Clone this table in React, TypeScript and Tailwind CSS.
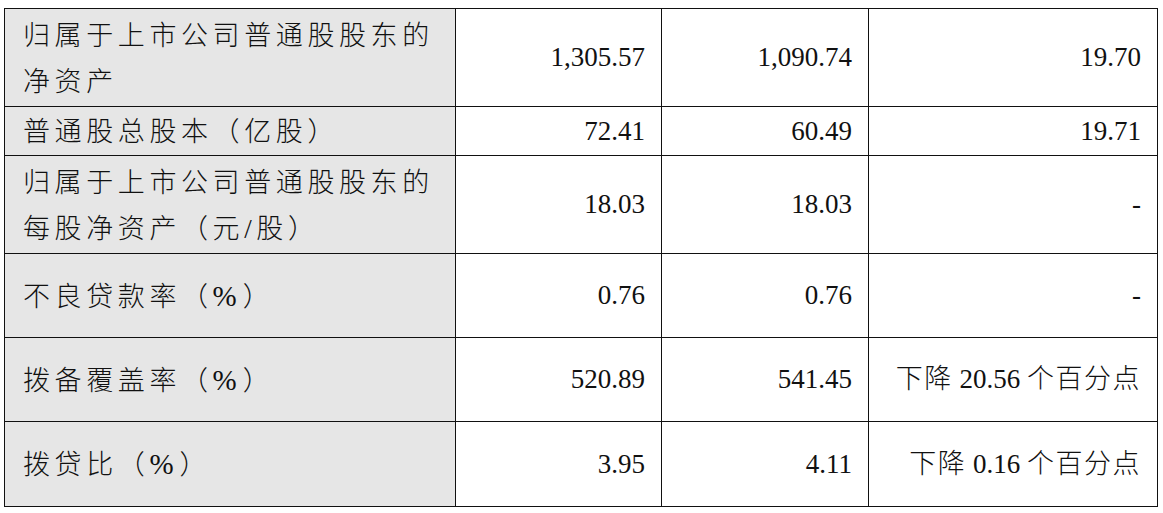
import React from 'react';

type Row = {
  label: React.ReactNode[];
  cur: string;
  prev: string;
  change: React.ReactNode;
  h: string;
};

const cjk = "font-['Liberation_Serif','Noto_Sans_CJK_SC',serif]";

// 百分号在原图里是衬线体，字号略大
const Pct = () => <span className="font-['Liberation_Serif'] text-[29px] leading-none font-normal tracking-[6px]">%</span>;

// 变动列里的中文字距比数字稍宽
function Change({ pre, num, post }: { pre: string; num: string; post: string }) {
  return (
    <span className="whitespace-nowrap">
      <span className="tracking-[1.5px]">{pre}</span> {num}{' '}
      <span className="tracking-[1.5px]">{post}</span>
    </span>
  );
}

const rows: Row[] = [
  { label: ['归属于上市公司普通股股东的', '净资产'], cur: '1,305.57', prev: '1,090.74', change: '19.70', h: 'h-[98px]' },
  { label: ['普通股总股本（亿股）'], cur: '72.41', prev: '60.49', change: '19.71', h: 'h-[49px]' },
  { label: ['归属于上市公司普通股股东的', '每股净资产（元/股）'], cur: '18.03', prev: '18.03', change: '-', h: 'h-[98px]' },
  { label: [<>不良贷款率（<Pct />）</>], cur: '0.76', prev: '0.76', change: '-', h: 'h-[84px]' },
  {
    label: [<>拨备覆盖率（<Pct />）</>],
    cur: '520.89',
    prev: '541.45',
    change: <Change pre="下降" num="20.56" post="个百分点" />,
    h: 'h-[84px]',
  },
  {
    label: [<>拨贷比（<Pct />）</>],
    cur: '3.95',
    prev: '4.11',
    change: <Change pre="下降" num="0.16" post="个百分点" />,
    h: 'h-[85px]',
  },
];

export default function App() {
  return (
    <div className={`min-h-[513px] w-[1163px] bg-white pt-[8px] pl-[4px] text-[27px] text-[#111] ${cjk}`}>
      <table className="w-[1153px] table-fixed border-collapse">
        <colgroup>
          <col className="w-[451px]" />
          <col className="w-[206px]" />
          <col className="w-[207px]" />
          <col className="w-[289px]" />
        </colgroup>
        <tbody>
          {rows.map((r, i) => (
            <tr key={i} className={r.h}>
              <td className="border border-[#111] bg-[#e6e6e6] pl-[18px] pt-[2px] align-middle font-light leading-[46px] tracking-[4.6px]">
                {r.label.map((l, j) => (
                  <div key={j} className="whitespace-nowrap">{l}</div>
                ))}
              </td>
              <td className="border border-[#111] pr-[16px] text-right align-middle">{r.cur}</td>
              <td className="border border-[#111] pr-[16px] text-right align-middle">{r.prev}</td>
              <td className="border border-[#111] pr-[16px] text-right align-middle font-light">{r.change}</td>
            </tr>
          ))}
        </tbody>
      </table>
    </div>
  );
}
